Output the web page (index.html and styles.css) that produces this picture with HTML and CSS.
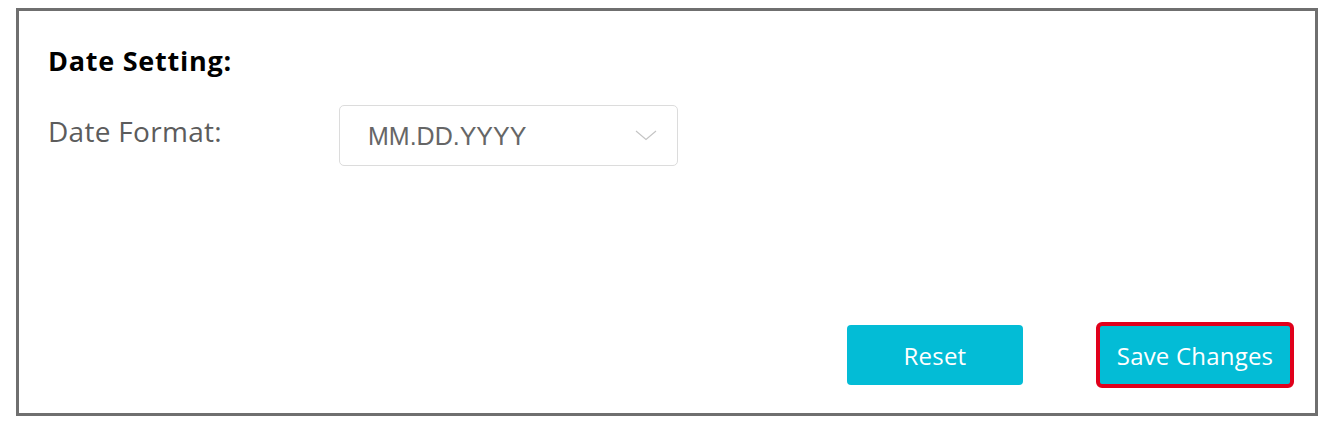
FILE: index.html
```html
<!DOCTYPE html>
<html lang="en">
<head>
<meta charset="utf-8">
<title>Date Setting</title>
<link rel="stylesheet" href="styles.css">
</head>
<body>
<div class="frame">
  <h2 class="title">Date Setting:</h2>
  <div class="row">
    <div class="label">Date Format:</div>
    <div class="select">
      <span class="select-value">MM.DD.YYYY</span>
      <svg class="chevron" width="22" height="11" viewBox="0 0 22 11"><polyline points="1,1 11,9.5 21,1" fill="none" stroke="#c4c4c4" stroke-width="1.1"/></svg>
    </div>
  </div>
  <div class="actions">
    <button class="btn reset">Reset</button>
    <button class="btn save">Save Changes</button>
  </div>
</div>
</body>
</html>
```

FILE: styles.css
```css
html, body {
  margin: 0;
  padding: 0;
  background: #ffffff;
}
body {
  padding: 8px 4px 0 16px;
  font-family: "Open Sans", "Noto Sans", sans-serif;
}
.frame {
  box-sizing: border-box;
  width: 1302px;
  height: 408px;
  border: 3px solid #6f6f6f;
  display: flex;
  flex-direction: column;
  padding: 36px 21px 25px 29px;
}
.title {
  margin: 0;
  font-size: 27px;
  line-height: 27px;
  font-weight: 700;
  color: #000000;
  letter-spacing: 0.75px;
}
.row {
  display: flex;
  align-items: flex-start;
  margin-top: 31px;
}
.label {
  width: 291px;
  margin-top: 12px;
  font-size: 28px;
  line-height: 28px;
  color: #5c5c5c;
  letter-spacing: 0.3px;
}
.select {
  box-sizing: border-box;
  width: 339px;
  height: 61px;
  border: 1px solid #dcdcdc;
  border-radius: 5px;
  display: flex;
  align-items: center;
  justify-content: space-between;
  padding: 0 20px 0 28px;
}
.select-value {
  font-family: "Liberation Sans", Arial, sans-serif;
  font-size: 25px;
  color: #666666;
  padding-top: 1px;
}
.chevron {
  display: block;
}
.actions {
  margin-top: auto;
  display: flex;
  justify-content: flex-end;
  align-items: center;
  gap: 73px;
}
.btn {
  font-family: "Open Sans", "Noto Sans", sans-serif;
  font-size: 24px;
  color: #ffffff;
  background: #03bcd6;
  border: none;
  border-radius: 4px;
  padding: 0;
  letter-spacing: 0.2px;
}
.reset {
  width: 176px;
  height: 60px;
}
.save {
  box-sizing: border-box;
  width: 198px;
  height: 66px;
  border: 4px solid #e0001b;
  border-radius: 6px;
}
```
